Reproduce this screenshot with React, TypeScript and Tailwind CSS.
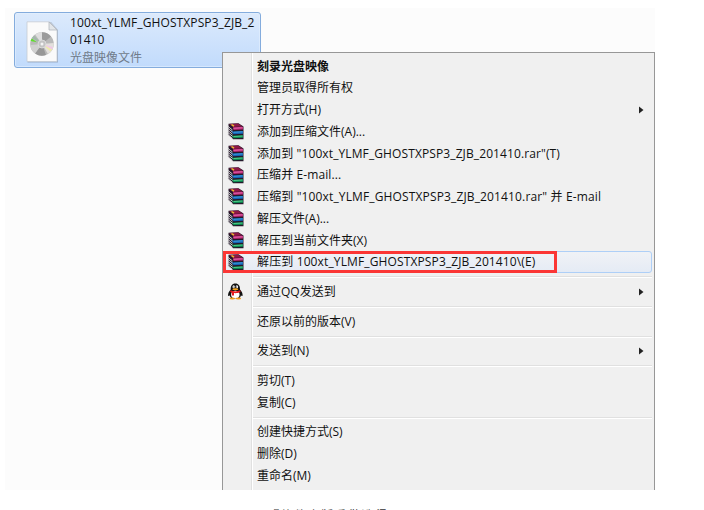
import type { ReactNode } from 'react';

type Entry = {
  text: string;
  icon?: 'rar' | 'qq';
  bold?: boolean;
  submenu?: boolean;
  active?: boolean;
  className?: string;
};

const groups: Entry[][] = [
  [
    { text: '刻录光盘映像', bold: true },
    { text: '管理员取得所有权' },
    { text: '打开方式(H)', submenu: true },
    { text: '添加到压缩文件(A)...', icon: 'rar' },
    { text: '添加到 "100xt_YLMF_GHOSTXPSP3_ZJB_201410.rar"(T)', icon: 'rar', className: 'tracking-[0.110px]' },
    { text: '压缩并 E-mail...', icon: 'rar', className: 'tracking-[0.100px]' },
    { text: '压缩到 "100xt_YLMF_GHOSTXPSP3_ZJB_201410.rar" 并 E-mail', icon: 'rar', className: 'tracking-[0.140px]' },
    { text: '解压文件(A)...', icon: 'rar' },
    { text: '解压到当前文件夹(X)', icon: 'rar' },
    { text: '解压到 100xt_YLMF_GHOSTXPSP3_ZJB_201410\\(E)', icon: 'rar', active: true, className: 'tracking-[0.130px]' },
  ],
  [{ text: '通过QQ发送到', icon: 'qq', submenu: true }],
  [{ text: '还原以前的版本(V)' }],
  [{ text: '发送到(N)', submenu: true }],
  [{ text: '剪切(T)' }, { text: '复制(C)' }],
  [{ text: '创建快捷方式(S)' }, { text: '删除(D)' }, { text: '重命名(M)' }],
];

function RarIcon() {
  return (
    <svg width="17" height="17" viewBox="0 0 17 17">
      <path d="M1.500 .8 11.500 .3 16.500 3.500V16.200H6L1.500 12Z" fill="#24182a" />
      <path d="M2 1 11 .5 15.500 3.500 6 4Z" fill="#8d1746" />
      <path d="M6 4.300 16 3.800V6.500L6.500 7Z" fill="#b82270" />
      <path d="M6.500 5.300 15.500 4.800" stroke="#e66cae" strokeWidth="1" />
      <path d="M3 6.800 6 8.500 16 8V10.800L6.500 11.300Z" fill="#1464b4" />
      <path d="M6.500 9.300 15.500 8.800" stroke="#3aa0e0" strokeWidth="1" />
      <path d="M3 10.800 6 12.700 16 12.200V14.800L6.500 15.300Z" fill="#0b8a50" />
      <path d="M6.500 13.500 15.500 13" stroke="#4fcc88" strokeWidth="1" />
      <path d="M.5 3 5.500 7M.5 5 5.500 9M.5 7.200 5.500 11.200M.5 9.300 5.500 13.300M.5 11.400 5.500 15.400" stroke="#dcdcdc" strokeWidth=".9" />
      <path d="M4.500 1.500 7 3.200" stroke="#e6c52c" strokeWidth="1.500" />
    </svg>
  );
}

function QQIcon() {
  return (
    <svg width="17" height="17" viewBox="0 0 17 17">
      <path d="M8.300.5C5 .5 3.600 3 3.700 6.500 2 8.300.7 10.500 1.200 13c.7.200 1.500-.8 1.500-.8.500 2.800 2.500 3.800 5.600 3.800s5.200-1 5.700-3.800c0 0 .9 1 1.500.8.500-2.500-.8-4.700-2.500-6.500C13.100 3 11.600.5 8.300.5Z" fill="#111" />
      <ellipse cx="8.300" cy="11.700" rx="4.300" ry="4" fill="#fff" />
      <ellipse cx="6.700" cy="3.800" rx="1.200" ry="1.500" fill="#fff" />
      <ellipse cx="9.900" cy="3.800" rx="1.200" ry="1.500" fill="#fff" />
      <circle cx="7" cy="4" r=".6" fill="#111" />
      <circle cx="9.600" cy="4" r=".6" fill="#111" />
      <ellipse cx="8.300" cy="6.200" rx="3" ry="1" fill="#f5a318" />
      <path d="M3.500 7.300c3 1.500 6.600 1.500 9.600 0l.4 1.700c-2 1-4.500 1.300-6.500 1.100v2.500H4.800V9.700l-1.700-.9Z" fill="#e6191e" />
      <ellipse cx="5.300" cy="15.500" rx="2.700" ry="1.100" fill="#f09a1a" />
      <ellipse cx="11.400" cy="15.500" rx="2.700" ry="1.100" fill="#f09a1a" />
    </svg>
  );
}

function DiscFileIcon() {
  return (
    <svg width="34" height="43" viewBox="0 0 34 43">
      <path d="M1.500 1H25l7 8v32.500h-30.500Z" fill="#7f8fa6" opacity=".6" />
      <path d="M1 .8H23.500L31 8.500V40.500H1Z" fill="#fafafa" stroke="#c5cbd3" strokeWidth=".8" />
      <path d="M23 1v8h8Z" fill="#e3e6e9" stroke="#a9afb7" strokeWidth=".7" />
      <circle cx="16" cy="23" r="11.800" fill="#b9b9b9" />
      <path d="M16 23 9 13.500A11.800 11.800 0 0 1 16 11.200Z" fill="#dedede" />
      <path d="M16 23V11.200A11.800 11.800 0 0 1 25 15.500Z" fill="#9b9b9b" />
      <path d="M16 23 27.800 22A11.800 11.800 0 0 1 22 33Z" fill="#e3e0dc" />
      <path d="M16 23 20 34A11.800 11.800 0 0 1 9 32.500Z" fill="#979797" />
      <path d="M16 23 9 32.500A11.800 11.800 0 0 1 4.300 24Z" fill="#d0d0d0" />
      <path d="M11 21.300 4.600 20A11.800 11.800 0 0 1 5.800 17.500Z" fill="#5fe02c" />
      <path d="M16 23 6 17 8 14.500Z" fill="#a2b8aa" />
      <path d="m16 23 11 3-1 2.500Z" fill="#f0c9e6" />
      <path d="m16 23 10 5.500-1.500 2Z" fill="#eeeaa8" />
      <circle cx="16" cy="23" r="4" fill="#c4c4c4" stroke="#e0e0e0" strokeWidth=".8" />
      <circle cx="16" cy="23" r="1.500" fill="#f4f4f4" />
    </svg>
  );
}

function MenuRow({ entry }: { entry: Entry }) {
  let icon: ReactNode = null;
  if (entry.icon === 'rar') icon = <RarIcon />;
  if (entry.icon === 'qq') icon = <QQIcon />;

  return (
    <li
      className={`relative mr-0.5 ml-0.5 flex h-[21.750px] items-center rounded-[3px] border ${
        entry.active ? 'border-[#aecff7] bg-linear-to-b from-[#f0f2f6] to-[#e5ebf5]' : 'border-transparent'
      }`}
    >
      <span className="flex w-[31px] shrink-0 pl-px">{icon}</span>
      <span className={`pt-[0.800px] whitespace-pre ${entry.bold ? 'font-bold' : ''} ${entry.className ?? ''}`}>{entry.text}</span>
      {entry.submenu && (
        <svg className="mr-[7px] ml-auto" width="5" height="8" viewBox="0 0 5 8">
          <path d="M0 .5v7L4.500 4Z" fill="#222" />
        </svg>
      )}
      {entry.active && <span className="absolute -top-px -left-[3px] h-[22px] w-[334px] border-[3px] border-[#fb3635]" />}
    </li>
  );
}

export default function App() {
  return (
    <div className="relative h-[510px] w-[704px] overflow-hidden bg-white font-['Open_Sans','Noto_Sans_CJK_SC',sans-serif] text-[12px] leading-4 text-[#111]">
      <main className="relative mt-2 ml-[5px] h-[482px] w-[650px] overflow-hidden bg-[#fcfcfc]">
        <div className="ml-[9px] flex h-14 w-[247px] translate-y-1 rounded-[3px] border border-[#84acdd] bg-linear-to-b from-[#dceafc] to-[#c1dbfc] pt-2 pl-[11px] inset-ring inset-ring-[#e5f0fd]/60">
          <DiscFileIcon />
          <div className="-mt-[7px] ml-[10px] leading-[17px]">
            <p className="tracking-[0.100px]">100xt_YLMF_GHOSTXPSP3_ZJB_2</p>
            <p>01410</p>
            <p className="pt-px text-[#707b8a]">光盘映像文件</p>
          </div>
        </div>
        {/* context menu */}
        <nav className="absolute top-11 left-[217px] h-[450px] w-[433px] border border-[#979797] bg-[#f0f0f0] pt-[2.400px]">
          <span className="absolute top-0 bottom-0 left-7 w-0.5 border-r border-l border-r-white border-l-[#e0e0e0]" />
          {groups.map((group, i) => (
            <ul key={i}>
              {i > 0 && (
                <li className="flex h-[7.900px] items-center pt-px pr-0.5 pl-[30px]">
                  <span className="h-0.5 w-full border-t border-b border-t-[#e0e0e0] border-b-white" />
                </li>
              )}
              {group.map((entry) => (
                <MenuRow key={entry.text} entry={entry} />
              ))}
            </ul>
          ))}
        </nav>
      </main>
      <p className="mt-[17.500px] pl-[267px] text-[12px] tracking-[1.500px] whitespace-nowrap text-[#333]">『软件小版重做选得图</p>
    </div>
  );
}
